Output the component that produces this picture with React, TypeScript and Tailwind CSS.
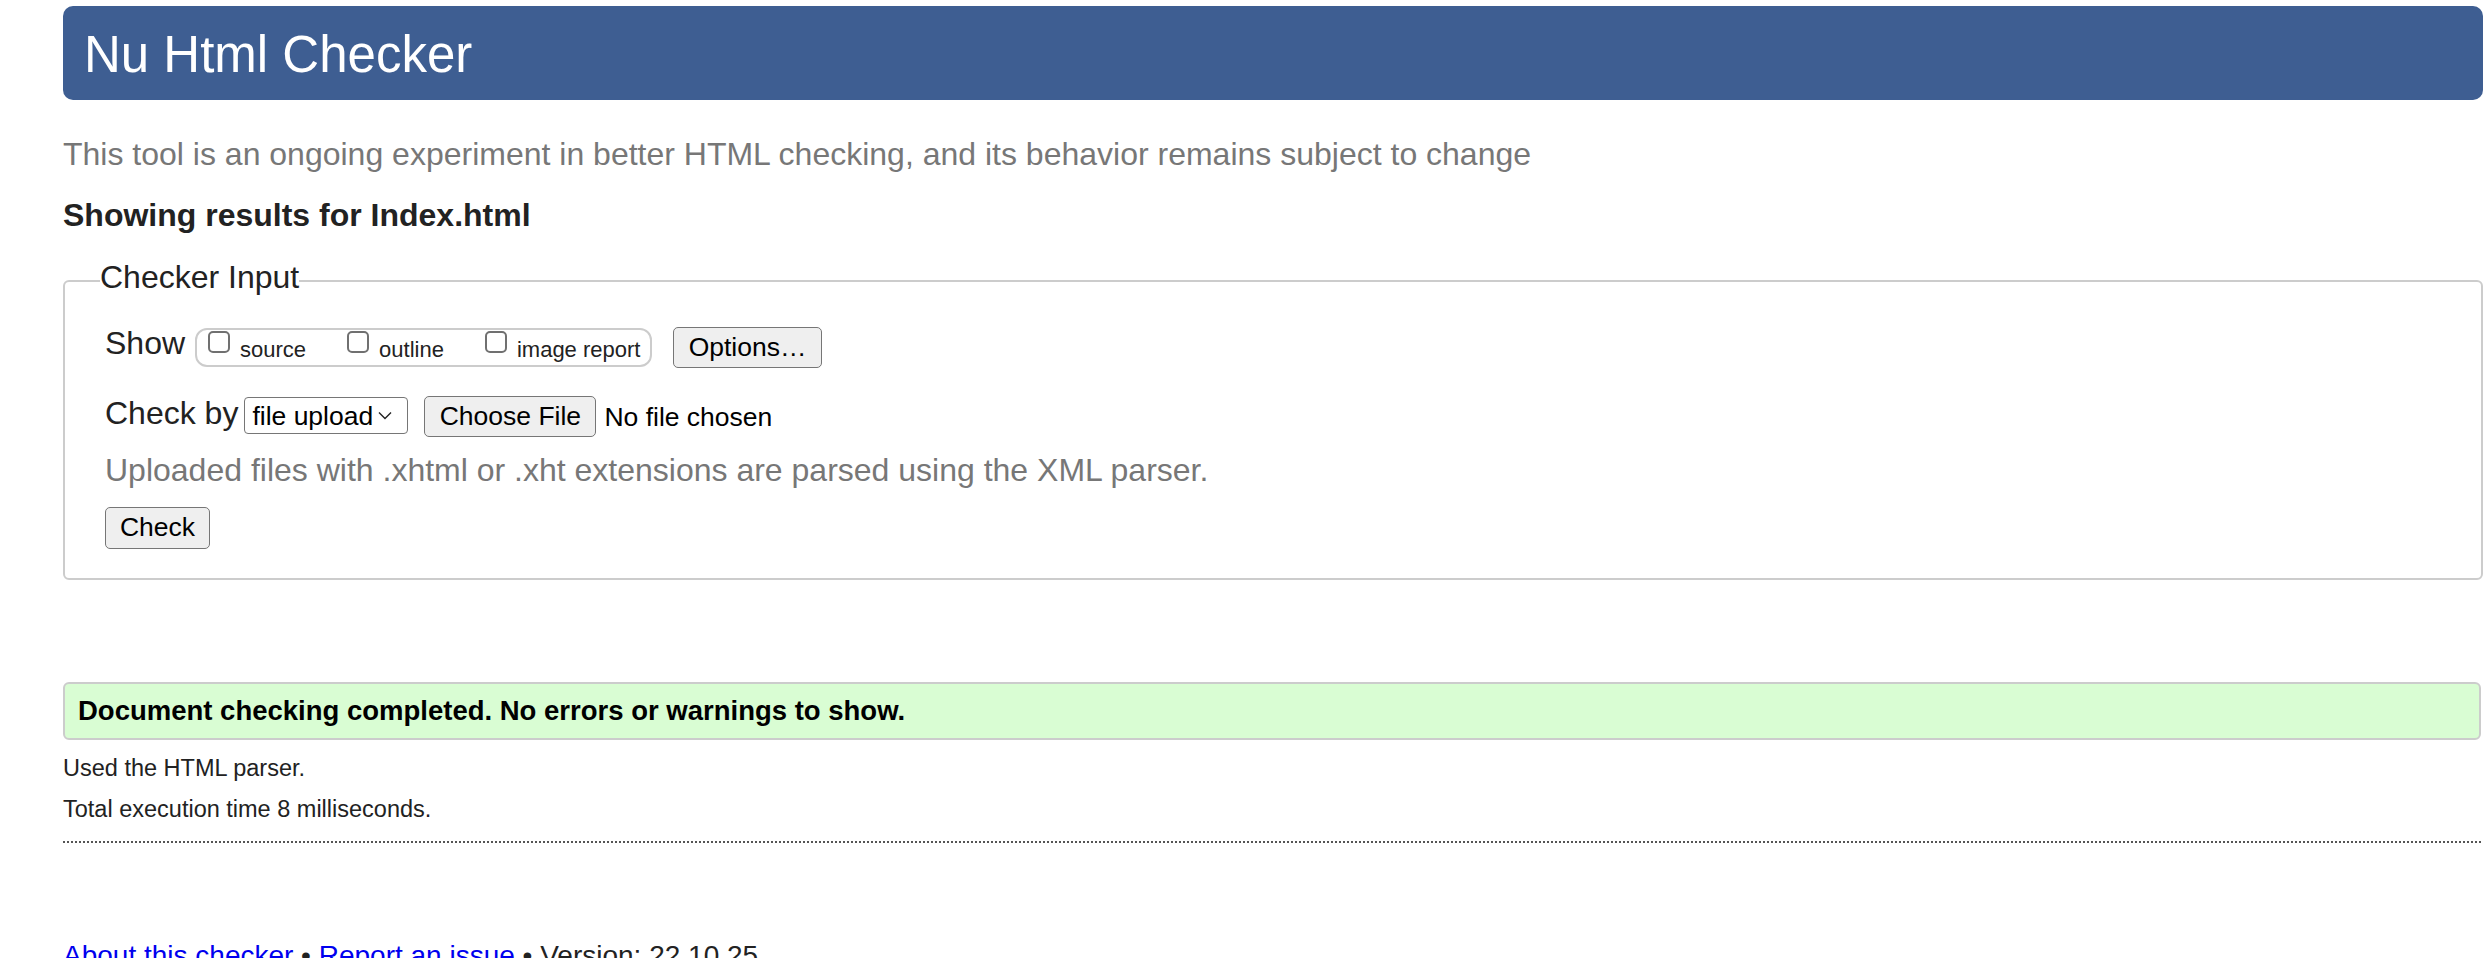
const Box = ({ label }: { label: string }) => {
  return (
    <label className="flex shrink-0 items-start">
      <input type="checkbox" className="mt-[1px] box-border block h-[22px] w-[22px] shrink-0 appearance-none rounded-[5px] border-2 border-[#707070] bg-white" />
      <span className="ml-[10px] mt-[7px] text-[22px] leading-[25px]">{label}</span>
    </label>
  );
};

const App = () => {
  return (
    <div className="min-h-screen bg-white pl-[63px] pr-[7px] font-['Liberation_Sans',Arial,sans-serif] text-[#222]">
      {/* Header */}
      <header className="mt-[6px] h-[94px] rounded-[10px] bg-[#3e5e92] pl-[21px] pt-[20px]">
        <h1 className="text-[51px] font-normal leading-[57px] text-white">Nu Html Checker</h1>
      </header>

      <p className="mt-[36px] text-[32px] leading-[37px] text-[#777]">
        This tool is an ongoing experiment in better HTML checking, and its behavior remains subject to change
      </p>
      <h2 className="mt-[24px] text-[32px] font-bold leading-[37px] text-[#222]">Showing results for Index.html</h2>

      {/* Checker input */}
      <fieldset className="mt-[25px] rounded-[6px] border-2 border-[#cccccc] pb-[29px] pl-[40px]">
        <legend className="ml-[-5px] pb-[6px] text-[32px] leading-[37px]">Checker Input</legend>

        <div className="mt-[23px] flex items-start">
          <span className="text-[32px] leading-[37px]">Show</span>
          <div className="ml-[10px] mt-[3px] flex h-[39px] w-[457px] items-start gap-[41px] rounded-[12px] border-2 border-[#cccccc] pl-[11px]">
            <Box label="source" />
            <Box label="outline" />
            <Box label="image report" />
          </div>
          <button className="ml-[21px] mt-[2px] flex h-[41px] w-[149px] items-center justify-center rounded-[5px] border-[1.5px] border-[#767676] bg-[#efefef] text-[26.5px] text-black">
            Options…
          </button>
        </div>

        <div className="mt-[27px] flex items-start">
          <span className="text-[32px] leading-[37px]">Check by</span>
          <div className="ml-[6px] mt-[2px] flex h-[37px] w-[164px] items-center rounded-[4px] border-[1.5px] border-[#767676] bg-white pl-[7px]">
            <select className="appearance-none bg-transparent text-[26.5px] leading-[30px] text-black outline-none">
              <option>file upload</option>
            </select>
            <svg className="ml-[5px]" width="14" height="9" viewBox="0 0 14 9" fill="none" stroke="#222" strokeWidth="1.4">
              <path d="M1 1.5l6 6 6-6" />
            </svg>
          </div>
          <label className="ml-[16px] mt-[1px] flex items-center">
            <span className="flex h-[41px] w-[172px] items-center justify-center rounded-[5px] border-[1.5px] border-[#767676] bg-[#efefef] text-[26.5px] text-black">
              Choose File
            </span>
            <span className="ml-[8px] text-[26.5px] leading-[30px] text-black">No file chosen</span>
          </label>
        </div>

        <p className="mt-[15px] text-[32px] leading-[37px] text-[#777]">
          Uploaded files with .xhtml or .xht extensions are parsed using the XML parser.
        </p>

        <button className="mt-[18px] flex h-[42px] w-[105px] items-center justify-center rounded-[5px] border-[1.5px] border-[#767676] bg-[#efefef] text-[26.5px] text-black">
          Check
        </button>
      </fieldset>

      {/* Results */}
      <div className="mt-[102px] mr-[2px] flex h-[58px] items-center rounded-[6px] border-2 border-[#cccccc] bg-[#d9fdd3] pl-[13px]">
        <p className="text-[27.5px] font-bold leading-[32px] text-black">
          Document checking completed. No errors or warnings to show.
        </p>
      </div>
      <p className="mt-[15px] text-[23.5px] leading-[27px]">Used the HTML parser.</p>
      <p className="mt-[14px] text-[23.5px] leading-[27px]">Total execution time 8 milliseconds.</p>
      <hr className="mt-[18px] mr-[2px] h-0 border-0 border-t-2 border-dotted border-[#555]" />

      <p className="mt-[97px] pb-[20px] text-[28px] leading-[32px]">
        <a href="#" className="text-[#0000ee] underline">About this checker</a> •{" "}
        <a href="#" className="text-[#0000ee] underline">Report an issue</a> • Version: 22.10.25
      </p>
    </div>
  );
};

export default App;
